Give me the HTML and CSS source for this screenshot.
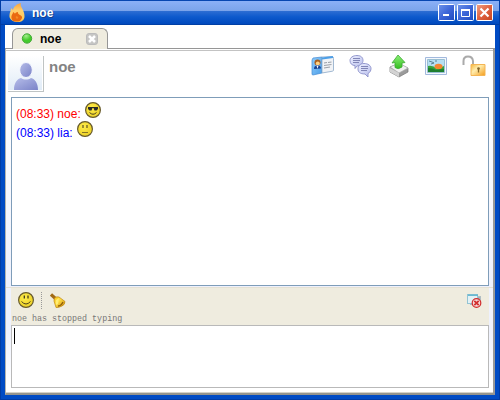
FILE: index.html
```html
<!DOCTYPE html>
<html lang="en">
<head>
<meta charset="utf-8">
<title>noe</title>
<link rel="stylesheet" href="styles.css">
</head>
<body>
<svg width="0" height="0" class="defs">
  <defs>
    <linearGradient id="blue" x2="1" y2="1"><stop stop-color="#6d94ea"/><stop offset=".5" stop-color="#3d66d8"/><stop offset="1" stop-color="#1d4abf"/></linearGradient>
    <linearGradient id="red" x2="1" y2="1"><stop stop-color="#f1a083"/><stop offset=".5" stop-color="#df6240"/><stop offset="1" stop-color="#c8441f"/></linearGradient>
    <linearGradient id="flame" y2="1" x2="0"><stop stop-color="#f9a13a"/><stop offset=".4" stop-color="#ffd070"/><stop offset="1" stop-color="#ffc652"/></linearGradient>
    <linearGradient id="person" x2="1" y2="1"><stop stop-color="#b6bde9"/><stop offset="1" stop-color="#7a83c8"/></linearGradient>
    <linearGradient id="bubble" x2="1" y2="1"><stop stop-color="#edf0ff"/><stop offset="1" stop-color="#b7bdeb"/></linearGradient>
    <linearGradient id="gold" x2="1" y2="1"><stop stop-color="#f5b63c"/><stop offset=".4" stop-color="#ffedae"/><stop offset="1" stop-color="#f49b18"/></linearGradient>
    <linearGradient id="green" x2="0" y2="1"><stop stop-color="#8cf078"/><stop offset="1" stop-color="#35bd20"/></linearGradient>
    <linearGradient id="card" x2="1" y2="1"><stop stop-color="#8fccfc"/><stop offset="1" stop-color="#4c9fe8"/></linearGradient>
    <linearGradient id="bell" x2="1" y2="1"><stop stop-color="#f8c420"/><stop offset=".4" stop-color="#ffdf45"/><stop offset="1" stop-color="#c98508"/></linearGradient>
    <radialGradient id="face" cx=".4" cy=".35"><stop stop-color="#ffed4b"/><stop offset="1" stop-color="#f0d62e"/></radialGradient>
    <radialGradient id="status" cx=".4" cy=".2"><stop stop-color="#a8ee90"/><stop offset="1" stop-color="#45cb2c"/></radialGradient>
  </defs>
</svg>
<div class="window">
  <header class="titlebar">
    <svg class="flame" width="18" height="20" viewBox="0 0 18 20"><path d="M12 0C10 3 16 7 15.500 14c-.5 4-4 5.500-8 5C3 18.500 0 16 .5 12 .8 9 2 8 2 5l2 2C5 3 8 1 12 0Z" fill="url(#flame)"/><path d="M4 9c1 1 2 1 2 2 0-1 1-2 3-2-1 3 5 3 4 6-1 3-3 3.500-6 3.500-4 0-5-3-4.500-5.500C3 11 4 11 4 9Z" fill="#ea6a10"/><path d="M7 13c1 1 3 0 2 2s-3 0-2-2Z" fill="#f58a24"/></svg>
    <h1>noe</h1>
    <div class="controls">
      <svg width="17" height="17"><rect x=".5" y=".5" width="16" height="16" rx="1" fill="url(#blue)" stroke="#fff"/><path d="M5 11h6" stroke="#fff" stroke-width="2"/></svg>
      <svg width="17" height="17"><rect x=".5" y=".5" width="16" height="16" rx="1" fill="url(#blue)" stroke="#fff"/><path d="M4.500 12.500v-7h8v7ZM4 6h9" fill="none" stroke="#fff" /><path d="M4 6h9" stroke="#fff" stroke-width="2"/></svg>
      <svg width="17" height="17"><rect x=".5" y=".5" width="16" height="16" rx="1" fill="url(#red)" stroke="#fff"/><path d="m4.500 4.500 8 8m0-8-8 8" stroke="#fff" stroke-width="2.200"/></svg>
    </div>
  </header>
  <main class="client">
    <nav class="tabs">
      <div class="tab">
        <svg width="12" height="12"><circle cx="6" cy="5.500" r="4.700" fill="url(#status)" stroke="#46a93a"/></svg>
        <span>noe</span>
        <svg class="tab-close" width="12" height="12"><rect x=".5" y=".5" width="11" height="11" rx="2.500" fill="#c6c6c4" stroke="#bbb"/><path d="m3 3 6 6m0-6-6 6" stroke="#fff" stroke-width="2.500"/></svg>
      </div>
    </nav>
    <section class="panel">
      <div class="contact">
        <div class="avatar"><svg width="27" height="28" viewBox="0 0 27 28"><path d="M1 28c0-7 3-11 7-12 3 2 7 2 10 0 4 1 7 5 7 12Z" fill="url(#person)"/><ellipse cx="13" cy="8" rx="6.300" ry="7.500" fill="url(#person)" stroke="#f5f7ff"/></svg></div>
        <h2>noe</h2>
        <div class="actions">
          <svg width="24" height="22" viewBox="0 0 24 22"><path d="m2 3 9-1v16l-9 2q-1 0-1-1V5Z" fill="url(#card)" stroke="#448ad2" stroke-width=".7"/><path d="m11 2 10-.5q1.500 0 1.500 2V15q0 1-1 1.200L11 18Z" fill="#f1f3f6" stroke="#8ca8c8" stroke-width=".8"/><path d="M11 3.500 22 2" stroke="#4c9fe8" stroke-width="1.800"/><circle cx="6.500" cy="7.500" r="3" fill="#ac601e"/><circle cx="6.800" cy="8.500" r="2" fill="#ffd284"/><path d="M3 14c0-3 2-3.500 3.500-3.500S10 11 10 13.500Z" fill="#173f91"/><path d="m5.500 10.800 1 3 1-3" fill="#fff"/><path d="m13 8 3-.5m1 0 3.500-.5M13 10.500l7.500-1M13 13l6-1" stroke="#9ba0a8" stroke-width="1.100"/></svg>
          <svg class="chat" width="24" height="24" viewBox="0 0 24 24"><g fill="url(#bubble)" stroke="#8b90ca" stroke-width=".9"><path d="M8 1.500c4 0 6 2 6 5S11 12 8 12l-2 2.500v-3c-3 0-5-2-5-5s3-5 7-5Z"/><path d="M15 9.500c4 0 7 2 7 5 0 2-1 4-3 5v3.500l-3-3c-5 0-7-2-7-5s2-5.500 6-5.500Z"/></g><path d="M4 4.500h7M4 6.500h7M4 8.500h6M12 12.500h7m-7 2h7m-7 2h6" stroke="#777caf" stroke-width=".9"/></svg>
          <svg width="22" height="24" viewBox="0 0 22 24"><path d="m2 13 8-3 10 4v4l-9 5-9-5Z" fill="#9b9b9b" stroke="#777" stroke-width=".7"/><path d="m2 13 9-4 9 5-9 5Z" fill="#f0f0f0" stroke="#aaa" stroke-width=".7"/><path d="m2 14 9 5v4l-9-5Z" fill="#d3d3d3"/><path d="M7 13.500V8.500l-3 .5L10 1l7 7.500-3 .5v4q-4 3-7 .5Z" fill="url(#green)" stroke="#3da832" stroke-width=".8"/></svg>
          <svg width="22" height="18" viewBox="0 0 22 18"><path d="M.5.5h21v17H.5Z" fill="#f4f8fd" stroke="#a2b9dd"/><path d="M2.500 2.500h17v13h-17Z" fill="#b5dff3" stroke="#9abfd2"/><path d="M3 9q5-1 9 3l7-3v6H3Z" fill="#36a33c"/><ellipse cx="13.500" cy="9.500" rx="4" ry="2.800" fill="#f48631"/><path d="M3 11q5 0 8 2 5-1 8-1v3H3Z" fill="#1f7f2f"/><path d="m4 4 3 1 2 1-3 1m4-3 2 0" stroke="#456c7c" stroke-width=".8" fill="none"/></svg>
          <svg width="26" height="22" viewBox="0 0 26 22"><path d="M2.500 10V6q0-4.500 4.500-4.500T12 6v3" fill="none" stroke="#aaa" stroke-width="2"/><path d="M10 9.500h14v11H10Z" fill="url(#gold)" stroke="#f4b555"/><circle cx="17.500" cy="13.500" r="1.300" fill="#85672a"/><path d="M17.500 13v4.500" stroke="#85672a" stroke-width="1.300"/></svg>
        </div>
      </div>
      <div class="log">
        <p class="red"><span class="m1">(08:33) noe:</span><svg width="17" height="17"><circle cx="8" cy="8" r="7.400" fill="url(#face)" stroke="#675a2c" stroke-width="1.200"/><path d="M3 5h10v2l-1.500 1.500h-2L8.500 6H7.500L6.500 8.500h-2L3 7Z" fill="#292b27"/><path d="M4.500 10.500q3.500 3.500 7 0" fill="none" stroke="#4d421b"/></svg></p>
        <p class="blue"><span class="m2">(08:33) lia:</span><svg width="17" height="17"><circle cx="8" cy="8" r="7.400" fill="url(#face)" stroke="#675a2c" stroke-width="1.200"/><path d="M6 4v3m4-3v3" stroke="#5f5222" stroke-width="1.200"/><path d="M5 11.500h6" stroke="#857525"/></svg></p>
      </div>
      <div class="composer">
        <div class="tools">
          <svg width="17" height="17"><circle cx="8" cy="8" r="7.400" fill="url(#face)" stroke="#675a2c" stroke-width="1.200"/><path d="M6.300 3.500v3m3.700-3v3" stroke="#40371b" stroke-width="1.300"/><path d="M3.500 9.500q4.500 5 9 0" fill="none" stroke="#4d421b"/></svg>
          <i class="divider"></i>
          <svg class="bell" width="16" height="16"><path d="m1 1.500 5 4.500" stroke="#a26b17" stroke-width="3.200"/><path d="M4 8Q4 3 9 4l6 4.500q0 3-3 4.500-4 2-6 1.500Z" fill="url(#bell)" stroke="#bd8512" stroke-width=".7"/><path d="M8 13q3 0 5-4" fill="none" stroke="#8f5c0c" stroke-width="1.300"/><path d="m6 7 3-2-1 6-2 1Z" fill="#ffed76"/></svg>
          <svg class="clear" width="15" height="14"><rect x="3.500" y="2.500" width="10" height="8" fill="#a3b1b8" stroke="#b0bdc2"/><rect x=".5" y=".5" width="10" height="9" fill="#e3f1f5" stroke="#93c4d4"/><path d="M1 1.200h10" stroke="#64b6ce" stroke-width="1.500"/><circle cx="9.500" cy="9" r="4.300" fill="#f4dada" stroke="#d22c2c" stroke-width="1.200"/><path d="m7.300 6.800 4.400 4.400m0-4.400-4.400 4.400" stroke="#d22c2c" stroke-width="1.700"/></svg>
        </div>
        <p class="typing">noe has stopped typing</p>
        <div class="input"><i class="caret"></i></div>
      </div>
    </section>
  </main>
</div>
</body>
</html>
```
FILE: styles.css
```css
* { box-sizing: border-box; }
body, h1, h2, p { margin: 0; }
body { width: 500px; height: 400px; overflow: hidden; font-family: "Liberation Sans", Arial, sans-serif; }
svg { display: block; flex: none; }
.defs { position: absolute; }
.window { width: 500px; height: 400px; padding: 0 4px 4px; background: #004bc4; border: solid #003ca5; border-width: 0 1px 1px; }
.titlebar { height: 25px; margin: 0 -4px; padding: 0 6px 0 8px; display: flex; align-items: flex-start; background: linear-gradient(#0746b1 0 1px, #8bb0f7 1px, #7aa3ea 11px, #2e6ed3 11px, #0d59cc 17px, #0049bd 24px, #003fa5 24px); }
.flame { margin-top: 3px; }
h1 { margin: 5px 0 0 5px; color: #fff; font: bold 12px/16px "Liberation Sans", Arial, sans-serif; text-shadow: 1px 1px #153f8b; }
.controls { display: flex; gap: 2px; margin: 4px 0 0 auto; }
.client { height: 370px; background: #fff; display: flex; flex-direction: column; }
.tabs { height: 24px; padding: 3px 0 0 7px; border-bottom: 1px solid #969696; }
.tab { width: 96px; height: 22px; padding: 0 9px 1px 8px; border: 1px solid #969696; border-bottom: 0; border-radius: 6px 6px 0 0; background: #efecdf; display: flex; align-items: center; font: bold 12px/20px "Liberation Sans", Arial, sans-serif; }
.tab span { margin-left: 7px; }
.tab-close { margin-left: auto; }
.panel { flex: 1; border: 1px solid #b5b5ad; border-width: 0 2px 2px 1px; border-bottom-color: #94948e; border-right-color: #999; box-shadow: inset 0 -1px #d5d2c8; background: linear-gradient(#fff 50px, #eef1fd 235px, #eef1fd 280px, #fff 336px); }
.contact { height: 48px; margin-top: 1px; border-top: 1px solid #c3c3c3; display: flex; align-items: flex-start; }
.avatar { width: 36px; height: 36px; margin: 5px 0 0 2px; padding: 6px 0 0 5px; border: solid #bfc4c4; border-width: 0 1px 1px 0; background: linear-gradient(#fff, #dfebf7); box-shadow: inset 0 -1px #fff, inset -1px 0 #fff; }
h2 { margin: 6px 0 0 5px; color: #838383; font: bold 15px/19px "Liberation Sans", Arial, sans-serif; }
.actions { display: flex; align-items: center; justify-content: space-between; width: 176px; height: 24px; margin: 3px 6px 0 auto; }
.chat { margin: 0 1px 0 -1px; }
.log { height: 189px; margin: -1px 4px 0 5px; padding: 4px; border: 1px solid #7f9db9; background: #fff; }
.log p { height: 19px; display: flex; font-size: 12px; line-height: 24px; }
.log .m1 { width: 69px; }
.log .m2 { width: 61px; }
.red { color: #f00; }
.blue { color: #00f; }
.composer { margin-top: 1px; padding: 0 4px 0 5px; border-top: 1px solid #e5e1d3; }
.tools { height: 25px; padding: 0 7px; display: flex; align-items: center; background: #efecdf; }
.divider { width: 1px; height: 17px; margin: 0 8px 0 6px; border-left: 1px dotted #999; }
.clear { margin-left: auto; }
.typing { height: 12px; padding-left: 1px; background: #efecdf; color: #777; font: 8.35px/12px "Liberation Mono", monospace; white-space: nowrap; }
.input { height: 63px; padding: 2px; border: 1px solid #b9b9b9; background: #fff; }
.caret { display: block; width: 1px; height: 16px; background: #000; }
```
